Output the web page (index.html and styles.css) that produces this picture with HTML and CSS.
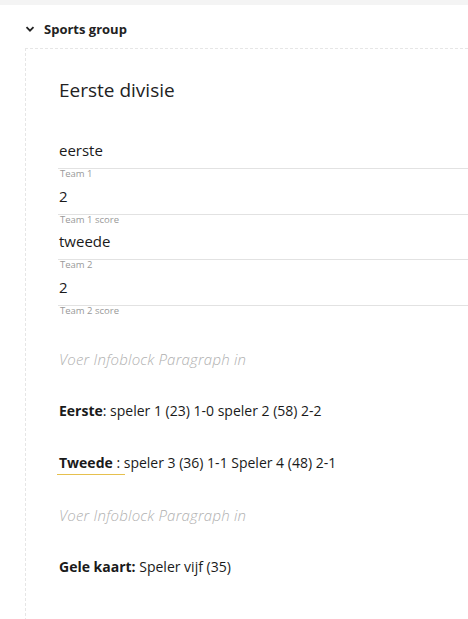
FILE: index.html
```html
<!DOCTYPE html>
<html lang="nl">
<head>
<meta charset="utf-8">
<link rel="stylesheet" href="styles.css">
</head>
<body>
<div class="topbar"></div>
<section class="group">
  <div class="group-head">
    <svg class="chev" width="10" height="10" viewBox="0 0 10 10"><path d="M1.5 3.2 L5 6.7 L8.5 3.2" fill="none" stroke="#222" stroke-width="1.8"/></svg>
    <span class="group-title">Sports group</span>
  </div>
  <div class="group-body">
    <h1 class="title">Eerste divisie</h1>
    <div class="fields">
      <div class="field"><div class="value">eerste</div><div class="label">Team 1</div></div>
      <div class="field"><div class="value">2</div><div class="label">Team 1 score</div></div>
      <div class="field"><div class="value">tweede</div><div class="label">Team 2</div></div>
      <div class="field"><div class="value">2</div><div class="label">Team 2 score</div></div>
    </div>
    <p class="para placeholder">Voer Infoblock Paragraph in</p>
    <p class="para"><b>Eerste</b>: speler 1 (23) 1-0 speler 2 (58) 2-2</p>
    <p class="para"><b class="marked">Tweede</b> : speler 3 (36) 1-1 Speler 4 (48) 2-1</p>
    <p class="para placeholder">Voer Infoblock Paragraph in</p>
    <p class="para"><b>Gele kaart:</b> Speler vijf (35)</p>
  </div>
</section>
</body>
</html>
```
FILE: styles.css
```css
html, body {
  margin: 0;
  padding: 0;
  background: #fff;
  font-family: "Open Sans", "Noto Sans", sans-serif;
  color: #1a1a1a;
}
.topbar {
  height: 5px;
  background: #f4f4f4;
}
.group {
  padding-left: 25px;
}
.group-head {
  display: flex;
  align-items: center;
  height: 43px;
  padding-top: 4px;
  box-sizing: border-box;
}
.chev {
  margin-right: 9px;
}
.group-title {
  font-size: 13px;
  font-weight: 700;
  color: #222;
}
.group-body {
  border-left: 1px dashed #e6e6e6;
  border-top: 1px dashed #e6e6e6;
  padding: 27px 0 40px 33px;
  min-height: 530px;
}
.title {
  margin: 0 0 29px 0;
  font-size: 19px;
  font-weight: 400;
  color: #222;
  line-height: 28px;
}
.fields {
  display: flex;
  flex-direction: column;
}
.field {
  display: flex;
  flex-direction: column;
}
.value {
  font-size: 15px;
  line-height: 20px;
  padding: 7px 0 8px 1px;
  border-bottom: 1px solid #e2e2e2;
  margin-left: -1px;
}
.label {
  font-size: 9.5px;
  line-height: 8.7px;
  color: #999;
  padding: 1px 0 0 1px;
}
.para {
  margin: 0;
  font-size: 14px;
  line-height: 20px;
  margin-top: 32px;
}
.fields + .para {
  margin-top: 33px;
}
.placeholder {
  font-style: italic;
  color: #b0b0b0;
  font-weight: 300;
  font-size: 15px;
  letter-spacing: 0.2px;
}
.marked {
  position: relative;
}
.marked::after {
  content: "";
  position: absolute;
  left: -2px;
  top: 21px;
  width: 68px;
  height: 1px;
  background: #e6c04e;
}
```
